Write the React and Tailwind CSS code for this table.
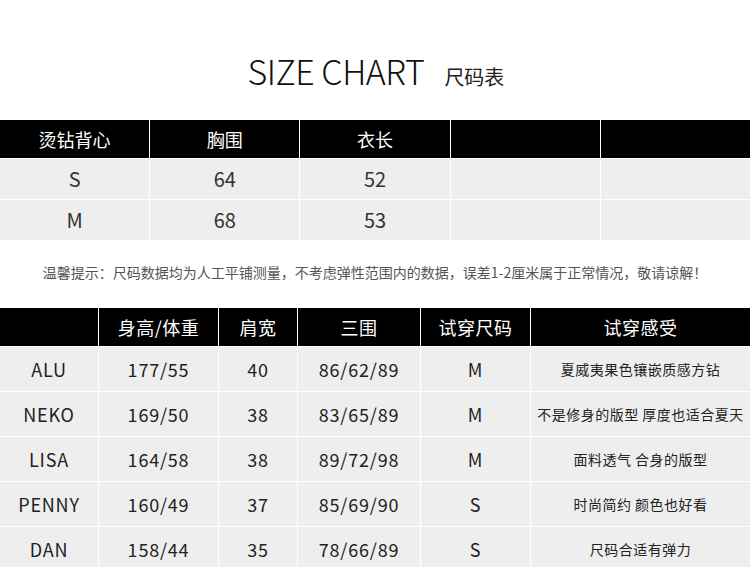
const font = { fontFamily: '"Noto Sans CJK SC", "Noto Sans", sans-serif' };

const sizeRows = [
  ['S', '64', '52'],
  ['M', '68', '53'],
];

const models = [
  ['ALU', '177/55', '40', '86/62/89', 'M', '夏威夷果色镶嵌质感方钻'],
  ['NEKO', '169/50', '38', '83/65/89', 'M', '不是修身的版型 厚度也适合夏天'],
  ['LISA', '164/58', '38', '89/72/98', 'M', '面料透气 合身的版型'],
  ['PENNY', '160/49', '37', '85/69/90', 'S', '时尚简约 颜色也好看'],
  ['DAN', '158/44', '35', '78/66/89', 'S', '尺码合适有弹力'],
];

function Cell({ children, className = '' }) {
  return <div className={`flex items-center justify-center whitespace-nowrap ${className}`}>{children}</div>;
}

export default function App() {
  return (
    <div className="w-[750px] h-[567px] overflow-hidden bg-white text-[#333]" style={font}>
      <div className="flex items-baseline justify-center pt-[54px] pl-[2px] h-[120px]">
        <span className="text-[34px] font-light tracking-[-0.5px] text-[#111] leading-none">SIZE CHART</span>
        <span className="text-[20px] text-[#222] ml-[20px] leading-none">尺码表</span>
      </div>

      <div className="grid grid-cols-5 gap-px bg-white">
        {['烫钻背心', '胸围', '衣长', '', ''].map((h, i) => (
          <Cell key={i} className="h-[38px] bg-black text-white text-[18px]">{h}</Cell>
        ))}
        {sizeRows.map((r) =>
          [...r, '', ''].map((v, i) => (
            <Cell key={r[0] + i} className="h-[40px] bg-[#eeeeee] text-[20px] text-[#333]">{v}</Cell>
          ))
        )}
      </div>

      <div className="h-[68px] flex items-center justify-center text-[14px] text-[#555] pb-[4px]">
        温馨提示：尺码数据均为人工平铺测量，不考虑弹性范围内的数据，误差1-2厘米属于正常情况，敬请谅解！
      </div>

      <div className="grid grid-cols-[98px_119px_78px_122px_109px_1fr] gap-px bg-white">
        {['', '身高/体重', '肩宽', '三围', '试穿尺码', '试穿感受'].map((h, i) => (
          <Cell key={i} className="h-[38px] bg-black text-white text-[18px] tracking-[0.5px]">{h}</Cell>
        ))}
        {models.map((m) =>
          m.map((v, i) => (
            <Cell
              key={m[0] + i}
              className={`h-[44px] bg-[#eeeeee] text-[#222] ${i === 5 ? 'text-[14px] tracking-[0.5px]' : 'text-[18px] tracking-[0.8px]'}`}
            >
              {v}
            </Cell>
          ))
        )}
      </div>
    </div>
  );
}
